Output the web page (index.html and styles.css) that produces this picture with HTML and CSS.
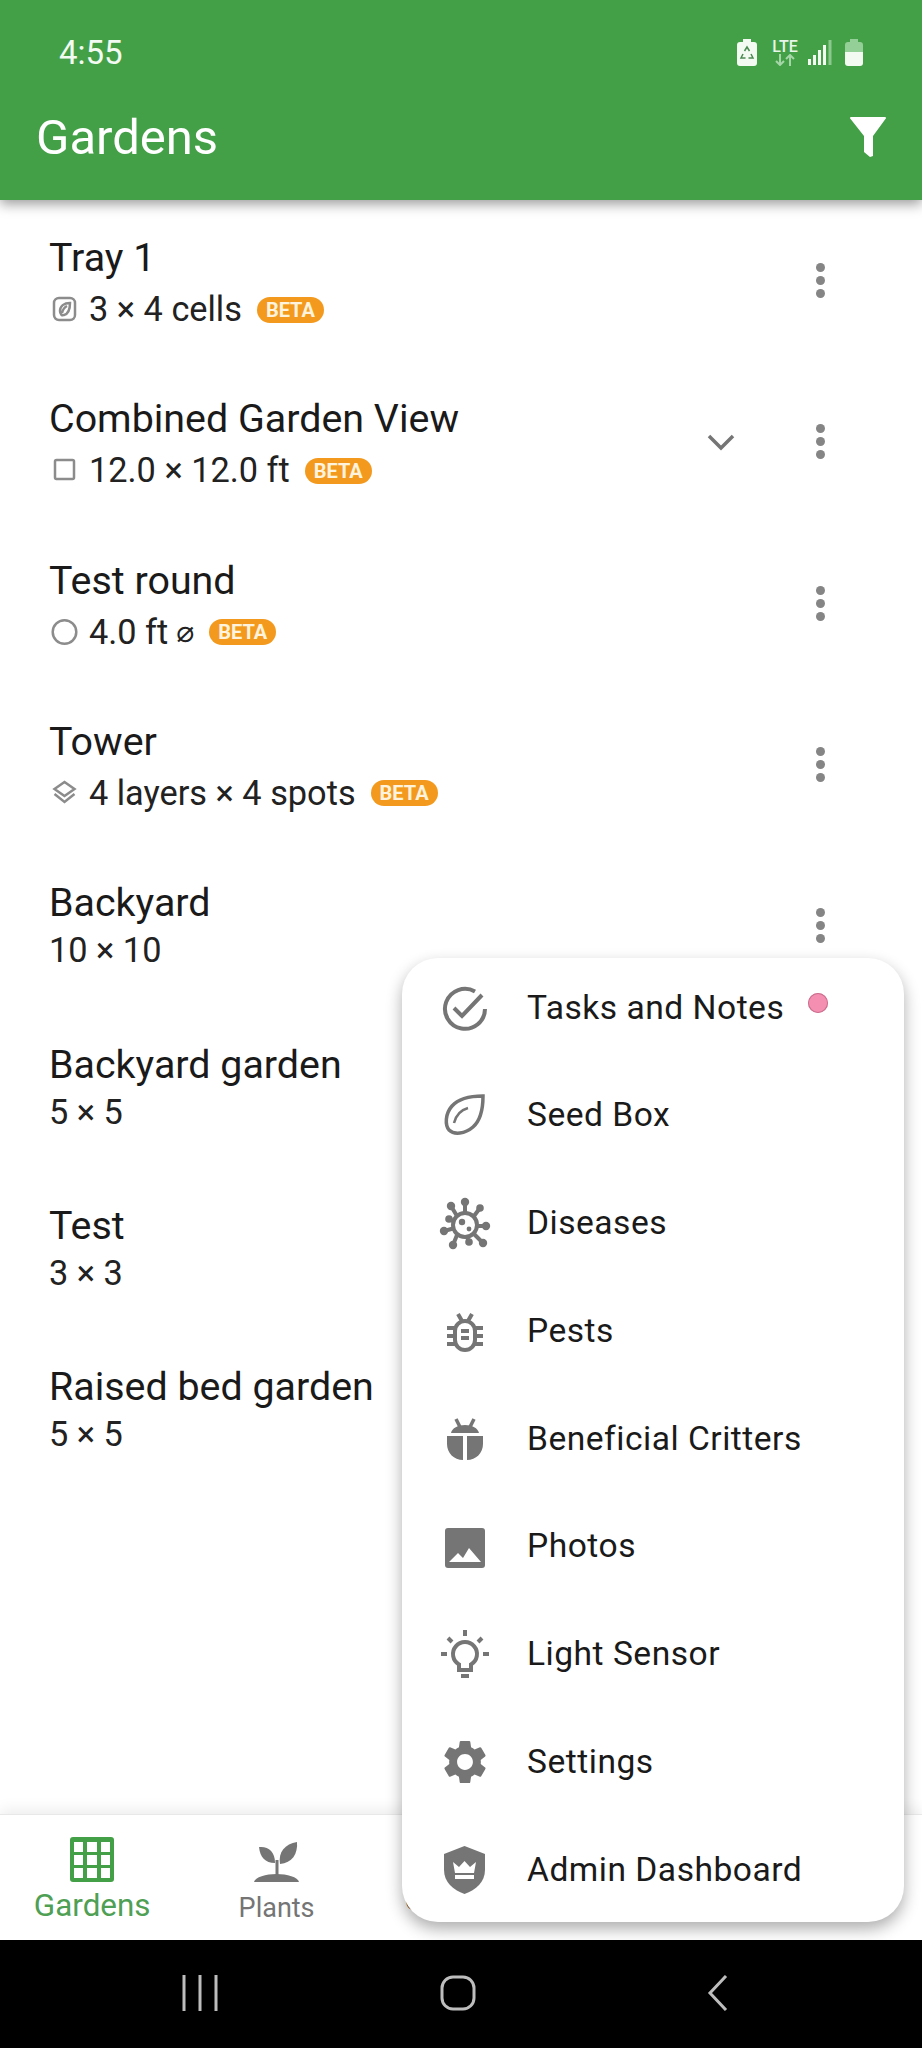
FILE: index.html
```html
<!DOCTYPE html>
<html lang="en">
    <head>
        <meta charset="utf8">
        <title>Gardens</title>
        <link rel="stylesheet" href="styles.css">
    </head>
    <body>
        <div class="phone">
            <header class="header">
                <div class="status">
                    <span class="time">4:55</span>
                    <div class="status_icons">
                        <svg width="20" height="27" viewBox="0 0 20 27">
                            <path d="M6 0h8v3h3a3 3 0 0 1 3 3v18a3 3 0 0 1-3 3H3a3 3 0 0 1-3-3V6a3 3 0 0 1 3-3h3z" fill="#f2faf2"/>
                            <path d="M7.500 12L10 8l2.500 4M14 15l2 4h-4.500M8.500 19H4l2-4" fill="none" stroke="#4a8a50" stroke-width="1.500"/>
                        </svg>
                        <div class="lte">
                            <span class="lte_text">LTE</span>
                            <svg width="26" height="12" viewBox="0 0 26 12">
                                <path d="M8 0v11M4 7l4 4 4-4" fill="none" stroke="#a5d6a7" stroke-width="2"/>
                                <path d="M18 12V1M14 5l4-4 4 4" fill="none" stroke="#a5d6a7" stroke-width="2"/>
                            </svg>
                        </div>
                        <svg width="24" height="25" viewBox="0 0 24 25">
                            <path d="M0 19h3v6H0zM5 15h3v10H5zM10 10h3v15h-3zM15 5h3v20h-3z" fill="#f2faf2"/>
                            <path d="M20.500 0h3v25h-3z" fill="#8cc98f"/>
                        </svg>
                        <svg width="18" height="27" viewBox="0 0 18 27">
                            <path d="M5 0h8v3h2a3 3 0 0 1 3 3v7H0V6a3 3 0 0 1 3-3h2z" fill="#95cf98"/>
                            <path d="M0 13h18v11a3 3 0 0 1-3 3H3a3 3 0 0 1-3-3z" fill="#f2faf2"/>
                        </svg>
                    </div>
                </div>
                <div class="appbar">
                    <h1 class="title">Gardens</h1>
                    <svg width="36" height="40" viewBox="0 0 36 40">
                        <path d="M1 0h34a1 1 0 0 1 .8 1.600L23 19v20l-3 1-6-5V19L.2 1.600A1 1 0 0 1 1 0z" fill="#fff"/>
                    </svg>
                </div>
            </header>

            <main class="list">
                <div class="row">
                    <div class="info">
                        <div class="name">Tray 1</div>
                        <div class="sub">
                            <svg class="sub_icon" viewBox="0 0 28 28">
                                <rect x="4" y="3" width="21" height="22" rx="5"/>
                                <path d="M20 8c-6 0-10 3-10 8 0 3 2 5 4 4 4-1 6-6 6-12zM12 18c1-4 3-6 5-7"/>
                            </svg>
                            <span>3 × 4 cells</span>
                            <span class="beta">BETA</span>
                        </div>
                    </div>
                    <div class="kebab"><i></i><i></i><i></i></div>
                </div>
                <div class="row">
                    <div class="info">
                        <div class="name">Combined Garden View</div>
                        <div class="sub">
                            <svg class="sub_icon" viewBox="0 0 28 28">
                                <rect x="5" y="4" width="19" height="19" rx="1.500"/>
                            </svg>
                            <span>12.0 × 12.0 ft</span>
                            <span class="beta">BETA</span>
                        </div>
                    </div>
                    <svg class="chevron" width="30" height="18" viewBox="0 0 30 18">
                        <path d="M3 3l12 12L27 3" fill="none" stroke="#757575" stroke-width="3.500"/>
                    </svg>
                    <div class="kebab"><i></i><i></i><i></i></div>
                </div>
                <div class="row">
                    <div class="info">
                        <div class="name">Test round</div>
                        <div class="sub">
                            <svg class="sub_icon" viewBox="0 0 28 28">
                                <circle cx="14.500" cy="14" r="11.800"/>
                            </svg>
                            <span>4.0 ft</span>
                            <span class="diameter">⌀</span>
                            <span class="beta">BETA</span>
                        </div>
                    </div>
                    <div class="kebab"><i></i><i></i><i></i></div>
                </div>
                <div class="row">
                    <div class="info">
                        <div class="name">Tower</div>
                        <div class="sub">
                            <svg class="sub_icon" viewBox="0 0 28 28">
                                <path d="M14.500 3l10 7-10 7-10-7zM4.500 15l10 8 10-8"/>
                            </svg>
                            <span>4 layers × 4 spots</span>
                            <span class="beta">BETA</span>
                        </div>
                    </div>
                    <div class="kebab"><i></i><i></i><i></i></div>
                </div>
                <div class="row">
                    <div class="info">
                        <div class="name">Backyard</div>
                        <div class="sub sub_plain"><span>10 × 10</span></div>
                    </div>
                    <div class="kebab"><i></i><i></i><i></i></div>
                </div>
                <div class="row">
                    <div class="info">
                        <div class="name">Backyard garden</div>
                        <div class="sub sub_plain"><span>5 × 5</span></div>
                    </div>
                    <div class="kebab"><i></i><i></i><i></i></div>
                </div>
                <div class="row">
                    <div class="info">
                        <div class="name">Test</div>
                        <div class="sub sub_plain"><span>3 × 3</span></div>
                    </div>
                    <div class="kebab"><i></i><i></i><i></i></div>
                </div>
                <div class="row">
                    <div class="info">
                        <div class="name">Raised bed garden</div>
                        <div class="sub sub_plain"><span>5 × 5</span></div>
                    </div>
                    <div class="kebab"><i></i><i></i><i></i></div>
                </div>
            </main>

            <nav class="tabs">
                <div class="tab tab_active">
                    <svg width="44" height="45" viewBox="0 0 44 45">
                        <rect width="44" height="45" rx="3" fill="#43a047"/>
                        <path d="M4 5h9v10H4zM17 5h10v10H17zM31 5h9v10h-9zM4 18h9v10H4zM17 18h10v10H17zM31 18h9v10h-9zM4 31h9v10H4zM17 31h10v10H17zM31 31h9v10h-9z" fill="#fff"/>
                    </svg>
                    <span>Gardens</span>
                </div>
                <div class="tab">
                    <svg width="45" height="40" viewBox="0 0 45 40">
                        <path d="M5 5c9-1 16 4 16 16C11 21 6 15 5 5z" fill="#757575"/>
                        <path d="M43 0c1 12-5 21-17 22C24 10 31 2 43 0z" fill="#757575"/>
                        <path d="M21.500 18h3v15h-3z" fill="#757575"/>
                        <path d="M0 40c1-5 12-8 22.500-8S44 35 45 40z" fill="#757575"/>
                    </svg>
                    <span>Plants</span>
                </div>
                <div class="tab tab_covered"><span>C</span></div>
            </nav>

            <div class="sysbar">
                <svg width="36" height="36" viewBox="0 0 36 36">
                    <path d="M2 0v36M18 0v36M34 0v36" stroke="#bdbdbd" stroke-width="3"/>
                </svg>
                <svg class="sys_home" width="36" height="36" viewBox="0 0 36 36">
                    <rect x="2" y="2" width="32" height="32" rx="11" fill="none" stroke="#bdbdbd" stroke-width="3"/>
                </svg>
                <svg class="sys_back" width="22" height="36" viewBox="0 0 22 36">
                    <path d="M19 1L3 18l16 17" fill="none" stroke="#bdbdbd" stroke-width="3"/>
                </svg>
            </div>

            <div class="menu">
                <div class="menu_item">
                    <svg class="menu_icon" viewBox="0 0 56 56">
                        <path class="line" d="M38 12.500A20 20 0 1 0 48 30"/>
                        <path class="line" d="M17 29l8 8 20-21"/>
                    </svg>
                    <span>Tasks and Notes</span>
                    <i class="dot"></i>
                </div>
                <div class="menu_item">
                    <svg class="menu_icon" viewBox="0 0 56 56">
                        <path class="line thin" d="M46 9C34 9 22 11 15 19 8 27 8 38 12 43c5 5 16 4 24-3 8-7 10-18 10-31z"/>
                        <path class="line vein" d="M17 36c2-8 7-13 14-15"/>
                    </svg>
                    <span>Seed Box</span>
                </div>
                <div class="menu_item">
                    <svg class="menu_icon" viewBox="0 0 56 56">
                        <circle class="line" cx="28" cy="30" r="12"/>
                        <path class="line" d="M28 7v11M14 11l6 10M43 13l-6 8M49 31H40M46 48l-9-9M32 47l-2-5M16 50l4-10M7 36l11-3M12 24l6 3"/>
                        <g class="fill">
                            <circle cx="28" cy="7" r="4.200"/><circle cx="14" cy="11" r="4.200"/><circle cx="43" cy="13" r="3.800"/>
                            <circle cx="49" cy="31" r="4.200"/><circle cx="46" cy="48" r="4.200"/><circle cx="32" cy="47" r="3.800"/>
                            <circle cx="16" cy="50" r="4.200"/><circle cx="7" cy="36" r="4.200"/><circle cx="12" cy="24" r="3.800"/>
                            <circle cx="25" cy="27" r="3.200"/><circle cx="32" cy="34" r="2.400"/>
                        </g>
                    </svg>
                    <span>Diseases</span>
                </div>
                <div class="menu_item">
                    <svg class="menu_icon" viewBox="0 0 56 56">
                        <rect class="line" x="18" y="19" width="20" height="29" rx="10"/>
                        <path class="line" d="M21 12l4 7M35 12l-4 7M10 26h8M10 34h8M10 42h8M38 26h8M38 34h8M38 42h8M24 29h8M24 36h8"/>
                    </svg>
                    <span>Pests</span>
                </div>
                <div class="menu_item">
                    <svg class="menu_icon" viewBox="0 0 56 56">
                        <path class="line thin" d="M19 9l4 8M37 9l-4 8"/>
                        <path class="fill" d="M14 23c1-5 7-8 14-8s13 3 14 8zM10 26h16v24c-9 0-16-7-16-16zM30 26h16v8c0 9-7 16-16 16z"/>
                    </svg>
                    <span>Beneficial Critters</span>
                </div>
                <div class="menu_item">
                    <svg class="menu_icon" viewBox="0 0 56 56">
                        <rect class="fill" x="8" y="10" width="40" height="40" rx="3"/>
                        <path d="M12 44l9-9 5 5 6-10 12 14z" fill="#fff"/>
                    </svg>
                    <span>Photos</span>
                </div>
                <div class="menu_item">
                    <svg class="menu_icon" viewBox="0 0 56 56">
                        <path class="line" d="M22 44v-5.500a12 12 0 1 1 12 0V44z"/>
                        <path class="line" d="M24 50h8M28 4v6M4 28h6M46 28h6M11 12l4 4M45 12l-4 4"/>
                    </svg>
                    <span>Light Sensor</span>
                </div>
                <div class="menu_item">
                    <svg class="menu_icon" viewBox="0 0 56 56">
                        <path class="fill" transform="translate(1.600 2.600) scale(2.200)" d="M19.140 12.940c.04-.3.06-.61.06-.94 0-.32-.02-.64-.07-.94l2.030-1.580c.18-.14.23-.41.12-.61l-1.920-3.320c-.12-.22-.37-.29-.59-.22l-2.390.96c-.5-.38-1.030-.7-1.620-.94l-.36-2.540c-.04-.24-.24-.41-.48-.41h-3.840c-.24 0-.43.17-.47.41l-.36 2.540c-.59.24-1.130.57-1.620.94l-2.390-.96c-.22-.08-.47 0-.59.22L2.740 8.870c-.12.21-.08.47.12.61l2.030 1.580c-.05.3-.09.63-.09.94s.02.64.07.94l-2.030 1.580c-.18.14-.23.41-.12.61l1.920 3.320c.12.22.37.29.59.22l2.390-.96c.5.38 1.030.7 1.620.94l.36 2.540c.05.24.24.41.48.41h3.840c.24 0 .44-.17.47-.41l.36-2.540c.59-.24 1.130-.56 1.620-.94l2.390.96c.22.08.47 0 .59-.22l1.920-3.320c.12-.22.07-.47-.12-.61l-2.010-1.580zM12 15.600c-1.980 0-3.600-1.620-3.600-3.600s1.620-3.600 3.600-3.600 3.600 1.620 3.600 3.600-1.620 3.600-3.600 3.600z"/>
                    </svg>
                    <span>Settings</span>
                </div>
                <div class="menu_item">
                    <svg class="menu_icon" viewBox="0 0 56 56">
                        <path class="fill" d="M27.500 5L48 13v16c0 12-9 20-20.500 24C16 49 7 41 7 29V13z"/>
                        <path d="M16 21l6 5 5.500-6 5.500 6 6-5-2 11H18zM18 34h19v4H18z" fill="#fff"/>
                    </svg>
                    <span>Admin Dashboard</span>
                </div>
            </div>
        </div>
    </body>
</html>
```

FILE: styles.css
```css
body {
    margin: 0;
    font-family: Roboto, "Liberation Sans", sans-serif;
    background: white;
}
.phone {
    position: relative;
    display: flex;
    flex-direction: column;
    width: 922px;
    height: 2048px;
    overflow: hidden;
}

/* top */
.header {
    position: relative;
    z-index: 2;
    height: 200px;
    flex: none;
    background: #43a047;
    color: white;
    box-shadow: 0 4px 12px rgba(0, 0, 0, 0.4);
}
.status {
    display: flex;
    align-items: center;
    justify-content: space-between;
    height: 104px;
    padding: 0 59px;
}
.time {
    font-size: 33px;
    color: #f2faf2;
}
.status_icons {
    display: flex;
    align-items: center;
    gap: 13px;
}
.lte {
    display: flex;
    flex-direction: column;
    align-items: center;
    width: 26px;
    margin: 0 -3px 0 2px;
}
.lte_text {
    font-size: 16px;
    font-weight: 500;
    line-height: 15px;
    color: #e8f5e9;
}
.appbar {
    display: flex;
    align-items: center;
    justify-content: space-between;
    height: 66px;
    padding: 0 36px 0 36px;
}
.title {
    margin: 0;
    font-size: 49px;
    font-weight: 400;
}

/* list */
.list {
    flex: 1;
    overflow: hidden;
}
.row {
    display: flex;
    align-items: center;
    height: 161.33px;
    padding: 0 72px 0 49px;
    box-sizing: border-box;
}
.info {
    flex: 1;
    align-self: flex-start;
    padding-top: 33px;
}
.name {
    font-size: 39.4px;
    line-height: 49px;
    color: #1a1a1a;
}
.sub {
    display: flex;
    align-items: center;
    height: 54px;
    font-size: 34.3px;
    color: #222;
}
.sub_plain {
    margin-top: -4px;
}
.sub_icon {
    width: 28px;
    height: 28px;
    margin: 0 11px 0 1px;
    fill: none;
    stroke: #8c8c8c;
    stroke-width: 2.500;
}
.diameter {
    margin-left: 8px;
    font-family: "DejaVu Sans", sans-serif;
    font-size: 30px;
}
.beta {
    display: flex;
    align-items: center;
    justify-content: center;
    width: 67px;
    height: 26px;
    margin: 1px 0 0 15px;
    border-radius: 13px;
    background: #f39a1e;
    color: #fff3dd;
    font-size: 20px;
    font-weight: 700;
}
.chevron {
    margin-right: 54px;
}
.kebab {
    display: flex;
    flex-direction: column;
    align-items: center;
    gap: 4px;
    width: 60px;
}
.kebab i {
    width: 9px;
    height: 9px;
    border-radius: 50%;
    background: #858585;
}

/* bottom */
.tabs {
    position: relative;
    z-index: 1;
    display: flex;
    flex: none;
    height: 126px;
    background: white;
    border-top: 1px solid #e8e8e8;
    box-sizing: border-box;
    box-shadow: 0 -4px 14px rgba(0, 0, 0, 0.08);
}
.tab {
    display: flex;
    flex-direction: column;
    align-items: center;
    width: 184.4px;
    padding-top: 27px;
    color: #757575;
    font-size: 27px;
    box-sizing: border-box;
}
.tab span {
    margin-top: 10px;
}
.tab_active {
    padding-top: 22px;
    color: #4f9f55;
    font-size: 31.4px;
}
.tab_active span {
    margin-top: 5px;
}
.tab_covered {
    align-items: flex-start;
    padding: 60px 0 0 36px;
    color: #333;
}
.sysbar {
    display: flex;
    align-items: center;
    flex: none;
    height: 108px;
    padding: 0 0 2px 182px;
    box-sizing: border-box;
    background: black;
}
.sys_home {
    margin-left: 222px;
}
.sys_back {
    margin-left: 231px;
}

/* popup menu */
.menu {
    position: absolute;
    z-index: 3;
    top: 958px;
    right: 18px;
    display: flex;
    flex-direction: column;
    gap: 9.75px;
    width: 502px;
    padding-bottom: 4px;
    box-sizing: border-box;
    background: white;
    border-radius: 36px;
    box-shadow: 0 7px 16px rgba(0, 0, 0, 0.32);
}
.menu_item {
    display: flex;
    align-items: center;
    gap: 34px;
    height: 98px;
    padding-left: 35px;
    font-size: 33.6px;
    letter-spacing: 0.5px;
    color: #1a1a1a;
}
.menu_icon {
    width: 56px;
    height: 56px;
    flex: none;
}
.line {
    fill: none;
    stroke: #757575;
    stroke-width: 4;
}
.thin {
    stroke-width: 3.500;
}
.vein {
    stroke-width: 2.500;
}
.fill {
    fill: #757575;
}
.dot {
    width: 20px;
    height: 20px;
    margin: -8px 0 0 -10px;
    border-radius: 50%;
    background: #f48fb1;
    box-shadow: inset 0 0 0 1px #c86f8e;
}
```
